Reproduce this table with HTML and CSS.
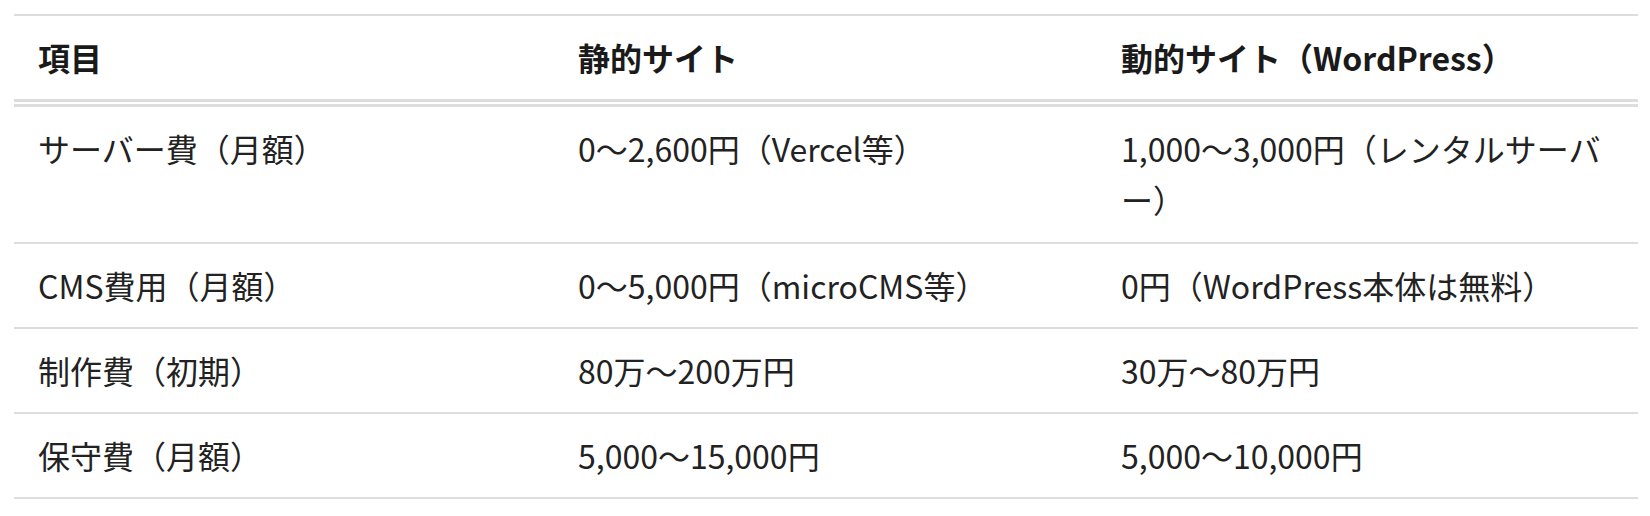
FILE: index.html
```html
<!DOCTYPE html>
<html lang="ja">
<head>
<meta charset="utf-8">
<link rel="stylesheet" href="styles.css">
</head>
<body>
<div class="wrap">
<table class="cmp">
  <colgroup>
    <col class="c1"><col class="c2"><col class="c3">
  </colgroup>
  <thead>
    <tr><th>項目</th><th>静的サイト</th><th>動的サイト（WordPress）</th></tr>
  </thead>
  <tbody>
    <tr><td>サーバー費（月額）</td><td>0〜2,600円（Vercel等）</td><td>1,000〜3,000円（レンタルサーバー）</td></tr>
    <tr><td>CMS費用（月額）</td><td>0〜5,000円（microCMS等）</td><td>0円（WordPress本体は無料）</td></tr>
    <tr><td>制作費（初期）</td><td>80万〜200万円</td><td>30万〜80万円</td></tr>
    <tr><td>保守費（月額）</td><td>5,000〜15,000円</td><td>5,000〜10,000円</td></tr>
  </tbody>
</table>
</div>
</body>
</html>
```
FILE: styles.css
```css
html, body {
  margin: 0;
  padding: 0;
  background: #fff;
}
.wrap {
  padding: 14px 12px 0 14px;
}
.cmp {
  width: 1624px;
  table-layout: fixed;
  border-collapse: collapse;
  font-family: "Noto Sans CJK JP", "Noto Sans", sans-serif;
  font-size: 32px;
  line-height: 1.6;
  color: #222;
  border-top: 2px solid #dddddd;
}
.c1 { width: 540px; }
.c2 { width: 543px; }
.c3 { width: 541px; }
.cmp th,
.cmp td {
  text-align: left;
  vertical-align: top;
  padding: 16px 24px;
}
.cmp th {
  font-weight: 700;
  color: #1a1a1a;
}
.cmp thead tr {
  border-bottom: 8px double #dddddd;
}
.cmp tbody tr {
  border-bottom: 2px solid #dddddd;
}
```
